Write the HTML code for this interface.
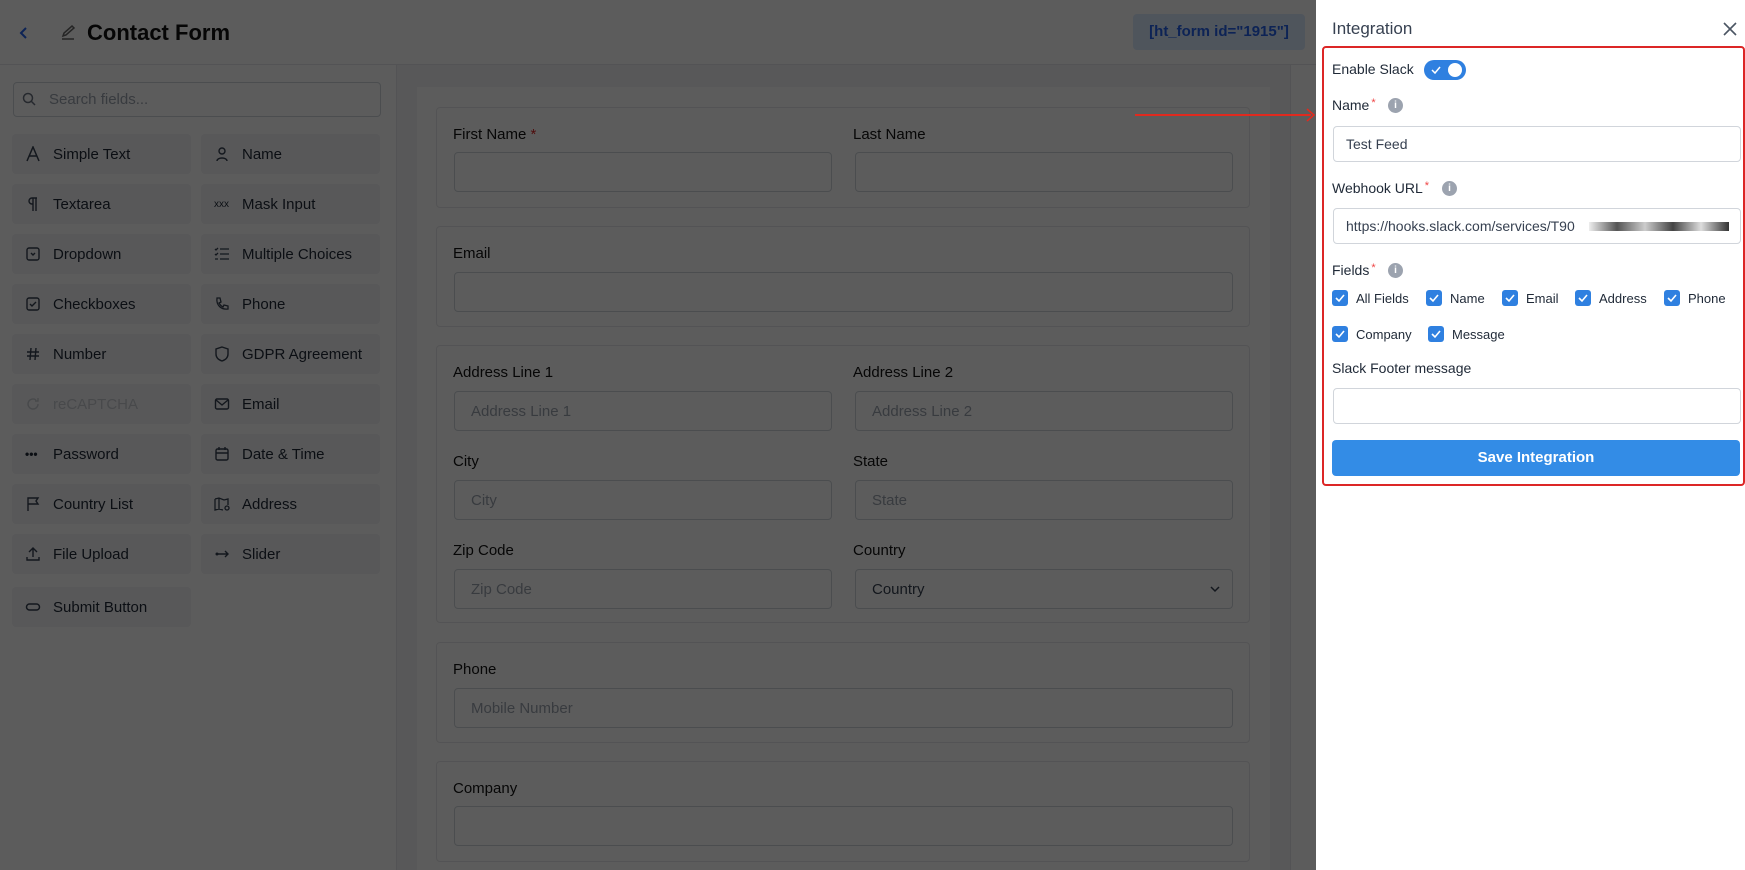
<!DOCTYPE html>
<html><head><meta charset="utf-8"><style>
*{box-sizing:border-box;margin:0;padding:0}
body{width:1745px;height:870px;overflow:hidden;position:relative;font-family:"Liberation Sans",sans-serif;background:#fff;color:#1f2937}
.a{position:absolute}
.hdr{left:0;top:0;width:1745px;height:65px;background:#fff;border-bottom:1px solid #e5e7eb}
.side{left:0;top:65px;width:397px;height:805px;background:#fff;border-right:1px solid #e5e7eb}
.tile{position:absolute;width:179px;height:40px;background:#f3f4f6;border-radius:4px;font-size:15px;color:#1f2937;display:flex;align-items:center;padding-left:13px;gap:12px}
.tile svg{width:16px;height:16px;flex:none}
.canvas{left:397px;top:65px;width:893px;height:805px;background:#f3f4f6}
.card{left:417px;top:87px;width:853px;height:783px;background:#fff}
.grp{position:absolute;left:436px;width:814px;border:1px solid #e5e7eb;border-radius:4px;background:#fff}
.lbl{position:absolute;font-size:15px;color:#111}
.inp{position:absolute;height:40px;border:1px solid #d1d5db;border-radius:4px;background:#fff;font-size:15px;color:#9ca3af;padding-left:16px;display:flex;align-items:center}
.ov{left:0;top:0;width:1316px;height:870px;background:rgba(0,0,0,0.64)}
.pnl{left:1316px;top:0;width:429px;height:870px;background:#fff}
.pl{position:absolute;font-size:14px;color:#1f2937}
.pi{position:absolute;left:1333px;width:408px;height:36px;border:1px solid #d1d5db;border-radius:4px;font-size:14px;color:#374151;padding-left:12px;display:flex;align-items:center}
.req{color:#ef4444;font-size:11px;vertical-align:top;margin-left:2px}
.info{position:absolute;width:15px;height:15px;border-radius:50%;background:#9ca3af;color:#fff;font-size:10px;text-align:center;line-height:15px;font-weight:bold}
.cb{position:absolute;display:flex;align-items:center;gap:8px;font-size:13px;color:#1f2937}
.cb i{width:16px;height:16px;background:#2f80e0;border-radius:3px;display:flex;align-items:center;justify-content:center}
</style></head><body>
<div class="a hdr"></div>
<svg class="a" style="left:18px;top:26px" width="12" height="14" viewBox="0 0 12 14"><path d="M8 2L3 7l5 5" fill="none" stroke="#2563eb" stroke-width="2"/></svg>
<svg class="a" style="left:59px;top:24px" width="18" height="18" viewBox="0 0 18 18"><path d="M3 15h12M4 12l1-3 8-7 2 2-8 7z" fill="none" stroke="#666" stroke-width="1.5"/></svg>
<div class="a" style="left:87px;top:20px;font-size:22px;font-weight:bold;color:#111">Contact Form</div>
<div class="a" style="left:1133px;top:14px;width:172px;height:36px;background:#dbeafe;border-radius:4px;color:#2563eb;font-size:15px;font-weight:bold;text-align:center;line-height:36px">[ht_form id="1915"]</div>
<div class="a side"></div>
<div class="a" style="left:13px;top:82px;width:368px;height:35px;border:1px solid #d1d5db;border-radius:4px;font-size:15px;color:#9ca3af;padding-left:35px;line-height:33px">Search fields...</div>
<svg class="a" style="left:22px;top:92px" width="14" height="14" viewBox="0 0 14 14"><circle cx="6" cy="6" r="4.5" fill="none" stroke="#6b7280" stroke-width="1.5"/><path d="M9.5 9.5L13 13" stroke="#6b7280" stroke-width="1.5"/></svg>
<div class="tile" style="left:12px;top:134px"><svg viewBox="0 0 16 16"><path d="M2 15L8 1l6 14M4 10h8" fill="none" stroke="#374151" stroke-width="1.5"/></svg>Simple Text</div>
<div class="tile" style="left:201px;top:134px"><svg viewBox="0 0 16 16"><circle cx="8" cy="5" r="3" fill="none" stroke="#374151" stroke-width="1.4"/><path d="M3 15c0-4 10-4 10 0" fill="none" stroke="#374151" stroke-width="1.4"/></svg>Name</div>
<div class="tile" style="left:12px;top:184px"><svg viewBox="0 0 16 16"><path d="M8 2v13M11 2v13M12 2H7a3 3 0 000 6h1" fill="none" stroke="#374151" stroke-width="1.4"/></svg>Textarea</div>
<div class="tile" style="left:201px;top:184px"><span style="font-size:10px;width:16px">xxx</span>Mask Input</div>
<div class="tile" style="left:12px;top:234px"><svg viewBox="0 0 16 16"><rect x="2" y="2" width="12" height="12" rx="2" fill="none" stroke="#374151" stroke-width="1.4"/><path d="M6 7l2 2 2-2" fill="none" stroke="#374151" stroke-width="1.4"/></svg>Dropdown</div>
<div class="tile" style="left:201px;top:234px"><svg viewBox="0 0 16 16"><path d="M6 3h9M6 8h9M6 13h9M1 3l1 1 2-2M1 8l1 1 2-2M1 13h3" fill="none" stroke="#374151" stroke-width="1.3"/></svg>Multiple Choices</div>
<div class="tile" style="left:12px;top:284px"><svg viewBox="0 0 16 16"><rect x="2" y="2" width="12" height="12" rx="2" fill="none" stroke="#374151" stroke-width="1.4"/><path d="M5 8l2 2 4-4" fill="none" stroke="#374151" stroke-width="1.4"/></svg>Checkboxes</div>
<div class="tile" style="left:201px;top:284px"><svg viewBox="0 0 16 16"><path d="M3 2h3l1 4-2 1c1 2 2 3 4 4l1-2 4 1v3c-7 1-12-4-11-11z" fill="none" stroke="#374151" stroke-width="1.3"/></svg>Phone</div>
<div class="tile" style="left:12px;top:334px"><svg viewBox="0 0 16 16"><path d="M6 2L5 14M11 2l-1 12M2 6h12M2 10h12" fill="none" stroke="#374151" stroke-width="1.4"/></svg>Number</div>
<div class="tile" style="left:201px;top:334px"><svg viewBox="0 0 16 16"><path d="M8 1l6 2v5c0 4-3 6-6 7-3-1-6-3-6-7V3z" fill="none" stroke="#374151" stroke-width="1.4"/></svg>GDPR Agreement</div>
<div class="tile" style="left:12px;top:384px;color:#c7cbd1"><svg viewBox="0 0 16 16"><path d="M13 8a5 5 0 11-2-4M13 2v3h-3" fill="none" stroke="#c7cbd1" stroke-width="1.4"/></svg>reCAPTCHA</div>
<div class="tile" style="left:201px;top:384px"><svg viewBox="0 0 16 16"><rect x="1.5" y="3" width="13" height="10" rx="1.5" fill="none" stroke="#374151" stroke-width="1.4"/><path d="M2 4l6 5 6-5" fill="none" stroke="#374151" stroke-width="1.4"/></svg>Email</div>
<div class="tile" style="left:12px;top:434px"><span style="font-size:12px;font-weight:bold;width:16px">•••</span>Password</div>
<div class="tile" style="left:201px;top:434px"><svg viewBox="0 0 16 16"><rect x="2" y="3" width="12" height="11" rx="1.5" fill="none" stroke="#374151" stroke-width="1.4"/><path d="M2 7h12M5 1v3M11 1v3" fill="none" stroke="#374151" stroke-width="1.4"/></svg>Date &amp; Time</div>
<div class="tile" style="left:12px;top:484px"><svg viewBox="0 0 16 16"><path d="M3 15V2h10l-2 3 2 3H3" fill="none" stroke="#374151" stroke-width="1.4"/></svg>Country List</div>
<div class="tile" style="left:201px;top:484px"><svg viewBox="0 0 16 16"><path d="M1 3l4-1 5 2 4-1v6M1 3v11l4-1 4 1M5 2v11" fill="none" stroke="#374151" stroke-width="1.3"/><circle cx="13" cy="12" r="2" fill="none" stroke="#374151" stroke-width="1.3"/></svg>Address</div>
<div class="tile" style="left:12px;top:534px"><svg viewBox="0 0 16 16"><path d="M8 11V2M4 6l4-4 4 4M2 11v3h12v-3" fill="none" stroke="#374151" stroke-width="1.4"/></svg>File Upload</div>
<div class="tile" style="left:201px;top:534px"><svg viewBox="0 0 16 16"><circle cx="3" cy="8" r="1.5" fill="#374151"/><path d="M3 8h11M11 5l3 3-3 3" fill="none" stroke="#374151" stroke-width="1.4"/></svg>Slider</div>
<div class="tile" style="left:12px;top:587px"><svg viewBox="0 0 16 16"><rect x="1.5" y="5" width="13" height="6" rx="3" fill="none" stroke="#374151" stroke-width="1.5"/></svg>Submit Button</div>

<div class="a canvas"></div>
<div class="a card"></div>
<div class="grp" style="top:107px;height:101px"></div>
<div class="lbl" style="left:453px;top:126px">First Name <span style="color:#dc2626">*</span></div>
<div class="lbl" style="left:853px;top:126px">Last Name</div>
<div class="inp" style="left:454px;top:152px;width:378px"></div>
<div class="inp" style="left:855px;top:152px;width:378px"></div>
<div class="grp" style="top:226px;height:101px"></div>
<div class="lbl" style="left:453px;top:245px">Email</div>
<div class="inp" style="left:454px;top:272px;width:779px"></div>
<div class="grp" style="top:345px;height:278px"></div>
<div class="lbl" style="left:453px;top:364px">Address Line 1</div>
<div class="lbl" style="left:853px;top:364px">Address Line 2</div>
<div class="inp" style="left:454px;top:391px;width:378px">Address Line 1</div>
<div class="inp" style="left:855px;top:391px;width:378px">Address Line 2</div>
<div class="lbl" style="left:453px;top:453px">City</div>
<div class="lbl" style="left:853px;top:453px">State</div>
<div class="inp" style="left:454px;top:480px;width:378px">City</div>
<div class="inp" style="left:855px;top:480px;width:378px">State</div>
<div class="lbl" style="left:453px;top:542px">Zip Code</div>
<div class="lbl" style="left:853px;top:542px">Country</div>
<div class="inp" style="left:454px;top:569px;width:378px">Zip Code</div>
<div class="inp" style="left:855px;top:569px;width:378px;color:#374151">Country<svg style="position:absolute;right:12px;top:15px" width="10" height="8" viewBox="0 0 10 8"><path d="M1 2l4 4 4-4" fill="none" stroke="#374151" stroke-width="1.5"/></svg></div>
<div class="grp" style="top:642px;height:101px"></div>
<div class="lbl" style="left:453px;top:661px">Phone</div>
<div class="inp" style="left:454px;top:688px;width:779px">Mobile Number</div>
<div class="grp" style="top:761px;height:101px"></div>
<div class="lbl" style="left:453px;top:780px">Company</div>
<div class="inp" style="left:454px;top:806px;width:779px"></div>
<div class="a" style="left:1290px;top:65px;width:26px;height:805px;background:#fff;border-left:1px solid #e5e7eb"></div>

<div class="a ov"></div>
<div class="a" style="left:1135px;top:114px;width:176px;height:2px;background:#e02a1f"></div>
<svg class="a" style="left:1306px;top:108px" width="10" height="14" viewBox="0 0 10 14"><path d="M1 1l7 6-7 6" fill="none" stroke="#e02a1f" stroke-width="1.6"/></svg>

<div class="a pnl"></div>
<div class="a" style="left:1332px;top:19px;font-size:17px;color:#374151">Integration</div>
<svg class="a" style="left:1723px;top:22px" width="14" height="14" viewBox="0 0 14 14"><path d="M1 1l12 12M13 1L1 13" stroke="#4b5563" stroke-width="1.6"/></svg>
<div class="a" style="left:1322px;top:46px;width:423px;height:440px;border:2px solid #dc2626;border-radius:4px"></div>
<div class="pl" style="left:1332px;top:61px">Enable Slack</div>
<div class="a" style="left:1424px;top:60px;width:42px;height:20px;border-radius:10px;background:#2f80e0"><svg class="a" style="left:7px;top:5px" width="10" height="10" viewBox="0 0 10 10"><path d="M1 5l3 3 5-6" fill="none" stroke="#fff" stroke-width="1.5"/></svg><div class="a" style="left:24px;top:3px;width:14px;height:14px;border-radius:50%;background:#fff"></div></div>
<div class="pl" style="left:1332px;top:97px">Name<span class="req">*</span></div>
<div class="info" style="left:1388px;top:98px">i</div>
<div class="pi" style="top:126px">Test Feed</div>
<div class="pl" style="left:1332px;top:180px">Webhook URL<span class="req">*</span></div>
<div class="info" style="left:1442px;top:181px">i</div>
<div class="pi" style="top:208px;overflow:hidden;white-space:nowrap">https://hooks.slack.com/services/T90<span style="display:inline-block;width:140px;height:9px;margin-left:14px;background:linear-gradient(90deg,#eee,#555 20%,#ccc 40%,#444 60%,#ddd 80%,#333)"></span></div>
<div class="pl" style="left:1332px;top:262px">Fields<span class="req">*</span></div>
<div class="info" style="left:1388px;top:263px">i</div>
<div class="cb" style="left:1332px;top:290px"><i><svg width="10" height="10" viewBox="0 0 10 10"><path d="M1 5l3 3 5-6" fill="none" stroke="#fff" stroke-width="1.6"/></svg></i>All Fields</div>
<div class="cb" style="left:1426px;top:290px"><i><svg width="10" height="10" viewBox="0 0 10 10"><path d="M1 5l3 3 5-6" fill="none" stroke="#fff" stroke-width="1.6"/></svg></i>Name</div>
<div class="cb" style="left:1502px;top:290px"><i><svg width="10" height="10" viewBox="0 0 10 10"><path d="M1 5l3 3 5-6" fill="none" stroke="#fff" stroke-width="1.6"/></svg></i>Email</div>
<div class="cb" style="left:1575px;top:290px"><i><svg width="10" height="10" viewBox="0 0 10 10"><path d="M1 5l3 3 5-6" fill="none" stroke="#fff" stroke-width="1.6"/></svg></i>Address</div>
<div class="cb" style="left:1664px;top:290px"><i><svg width="10" height="10" viewBox="0 0 10 10"><path d="M1 5l3 3 5-6" fill="none" stroke="#fff" stroke-width="1.6"/></svg></i>Phone</div>
<div class="cb" style="left:1332px;top:326px"><i><svg width="10" height="10" viewBox="0 0 10 10"><path d="M1 5l3 3 5-6" fill="none" stroke="#fff" stroke-width="1.6"/></svg></i>Company</div>
<div class="cb" style="left:1428px;top:326px"><i><svg width="10" height="10" viewBox="0 0 10 10"><path d="M1 5l3 3 5-6" fill="none" stroke="#fff" stroke-width="1.6"/></svg></i>Message</div>
<div class="pl" style="left:1332px;top:360px">Slack Footer message</div>
<div class="pi" style="top:388px"></div>
<div class="a" style="left:1332px;top:440px;width:408px;height:36px;background:#338ce6;border-radius:4px;color:#fff;font-size:15px;font-weight:bold;text-align:center;line-height:36px">Save Integration</div>
</body></html>
